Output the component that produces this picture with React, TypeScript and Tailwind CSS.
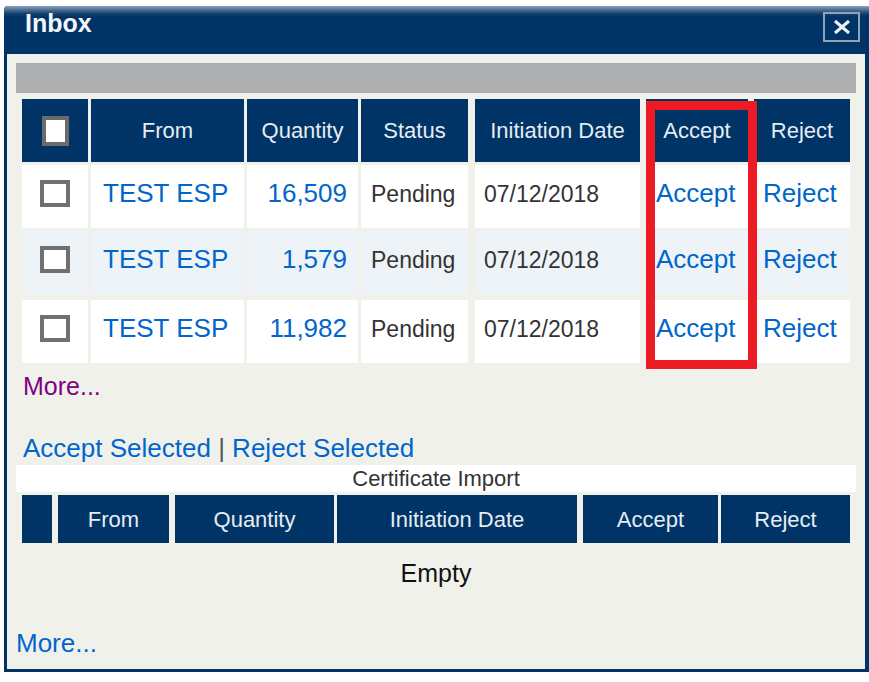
import React from 'react'

const rows = [
  { from: 'TEST ESP', qty: '16,509', status: 'Pending', date: '07/12/2018', bg: 'bg-white' },
  { from: 'TEST ESP', qty: '1,579', status: 'Pending', date: '07/12/2018', bg: 'bg-[#edf3f7]' },
  { from: 'TEST ESP', qty: '11,982', status: 'Pending', date: '07/12/2018', bg: 'bg-white' },
]

// inbox header cells (width + left gap taken from the screenshot)
const headCell = 'flex h-full items-center justify-center bg-[#003366] text-[22px] text-[#e6ecf3]'
const certCell = 'flex h-full items-center justify-center bg-[#003366] text-[22px] text-[#e6ecf3]'

const Checkbox = ({ header }: { header?: boolean }) => (
  <div
    className={
      header
        ? 'h-[30px] w-[27px] border-[4px] border-[#6b6b6b] bg-white'
        : 'h-[27px] w-[30px] border-[4px] border-[#707070] bg-white'
    }
  />
)

export default function App() {
  return (
    <div className="h-[682px] w-[869px] bg-white pl-[4px] pt-[6px] font-['Liberation_Sans',Arial,sans-serif]">
      <div className="flex h-[666px] w-[865px] flex-col overflow-hidden rounded-tl-[4px] bg-[#003366]">
        {/* Title bar */}
        <div className="relative h-[48px] shrink-0 bg-[linear-gradient(to_bottom,#8aa2bd_0px,#4a6d92_4px,#123f6e_8px,#003366_11px,#003366_100%)]">
          <div className="pl-[21px] pt-[3px] text-[25px] font-bold leading-[28px] text-[#f4f6f9]">Inbox</div>
          <div className="absolute right-[9px] top-[6px] flex h-[30px] w-[37px] items-center justify-center border-2 border-[#8fa3bb]">
            <svg width="20" height="16" viewBox="0 0 20 16">
              <path d="M3 2 L17 14 M17 2 L3 14" stroke="#eef2f7" strokeWidth="3" />
            </svg>
          </div>
        </div>

        {/* Body */}
        <div className="mb-[3px] ml-[3px] mr-[4px] flex-1 bg-[#f1f1ec]">
          <div className="ml-[9px] mt-[9px] h-[30px] w-[840px] bg-[#aeafb1]" />

          {/* Inbox table */}
          <div className="relative ml-[15px] mt-[6px]">
            <div className="flex h-[63px]">
              <div className={`${headCell} w-[66px]`}>
                <Checkbox header />
              </div>
              <div className={`${headCell} ml-[3px] w-[153px]`}>From</div>
              <div className={`${headCell} ml-[3px] w-[111px]`}>Quantity</div>
              <div className={`${headCell} ml-[3px] w-[107px]`}>Status</div>
              <div className={`${headCell} ml-[7px] w-[165px]`}>Initiation Date</div>
              <div className={`${headCell} ml-[6px] w-[102px]`}>Accept</div>
              <div className={`${headCell} ml-[6px] w-[96px]`}>Reject</div>
            </div>

            {rows.map((r, i) => (
              <div key={i} className={`flex h-[63px] ${i === 2 ? 'mt-[6px]' : 'mt-[3px]'}`}>
                <div className={`${r.bg} flex w-[66px] items-center justify-center pb-[6px]`}>
                  <Checkbox />
                </div>
                <div className={`${r.bg} ml-[3px] flex w-[153px] items-center pb-[6px] pl-[12px] text-[26px] text-[#0066cc]`}>
                  {r.from}
                </div>
                <div className={`${r.bg} ml-[3px] flex w-[111px] items-center justify-end pb-[6px] pr-[11px] text-[26px] text-[#0066cc]`}>
                  {r.qty}
                </div>
                <div className={`${r.bg} ml-[3px] flex w-[107px] items-center pb-[4px] pl-[10px] text-[23px] text-[#333333]`}>
                  {r.status}
                </div>
                <div className={`${r.bg} ml-[7px] flex w-[165px] items-center pb-[5px] pl-[9px] text-[23px] text-[#333333]`}>
                  {r.date}
                </div>
                <div className={`${r.bg} ml-[6px] flex w-[102px] items-center pb-[6px] pl-[10px] text-[26px] text-[#0066cc]`}>
                  Accept
                </div>
                <div className={`${r.bg} ml-[6px] flex w-[96px] items-center pb-[6px] pl-[9px] text-[26px] text-[#0066cc]`}>
                  Reject
                </div>
              </div>
            ))}

            {/* highlight around the Accept column */}
            <div className="absolute left-[624px] top-[2px] h-[268px] w-[111px] border-[9px] border-[#ed1c24]" />
          </div>

          <div className="ml-[16px] mt-[8px] text-[25px] leading-[30px] text-[#800080]">More...</div>

          <div className="ml-[16px] mt-[32px] text-[26px] leading-[30px] text-[#0066cc]">
            Accept Selected <span className="text-[#555555]">|</span> Reject Selected
          </div>

          {/* Certificate Import */}
          <div className="ml-[9px] mt-[2px] flex h-[27px] w-[840px] items-center justify-center bg-white text-[22px] text-[#333333]">
            Certificate Import
          </div>
          <div className="ml-[15px] mt-[3px] flex h-[48px]">
            <div className={`${certCell} w-[30px]`} />
            <div className={`${certCell} ml-[6px] w-[111px]`}>From</div>
            <div className={`${certCell} ml-[6px] w-[159px]`}>Quantity</div>
            <div className={`${certCell} ml-[3px] w-[240px]`}>Initiation Date</div>
            <div className={`${certCell} ml-[6px] w-[135px]`}>Accept</div>
            <div className={`${certCell} ml-[3px] w-[129px]`}>Reject</div>
          </div>
          <div className="mt-[15px] w-[858px] text-center text-[25px] leading-[30px] text-[#111111]">Empty</div>

          <div className="ml-[9px] mt-[40px] text-[26px] leading-[30px] text-[#0066cc]">More...</div>
        </div>
      </div>
    </div>
  )
}
